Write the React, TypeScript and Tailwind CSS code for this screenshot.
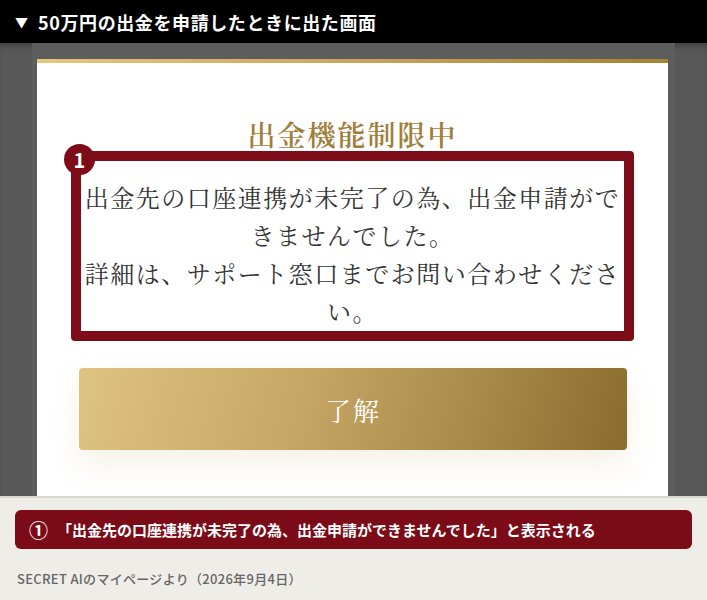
import React from 'react';

const serif = { fontFamily: '"Noto Serif CJK JP", "Liberation Serif", "Noto Sans CJK JP", serif' };

export default function App() {
  return (
    <div
      className="w-[707px] h-[600px] overflow-hidden bg-[#efede8]"
      style={{ fontFamily: '"Noto Sans CJK JP", "Noto Sans", sans-serif' }}
    >
      {/* Caption bar */}
      <div className="h-[43px] bg-black flex items-center pl-[15px]">
        <span className="text-white text-[13px] leading-none mr-[10px]">▼</span>
        <span className="text-white text-[18px] font-bold tracking-[0.6px] leading-none">
          50万円の出金を申請したときに出た画面
        </span>
      </div>

      {/* Screenshot area */}
      <div className="h-[453px] bg-[#585858] px-[32px] shadow-[inset_0_6px_6px_-4px_rgba(0,0,0,0.35)]">
        <div className="h-full bg-[#5d5d5d] pl-[5px] pr-[7px] pt-[16px]">
          <div className="h-full bg-white flex flex-col">
            <div className="h-[4px] bg-gradient-to-r from-[#e4c87c] via-[#c9a65a] to-[#a5832f]" />

            <h1
              className="mt-[54px] text-center text-[28px] font-semibold leading-[34px] tracking-[2px] text-[#a07e3a]"
              style={serif}
            >
              出金機能制限中
            </h1>

            {/* Highlighted message */}
            <div className="relative mx-[34px] border-[10px] border-[#7d0c18] rounded-[4px] pt-[17px] pb-[1px]">
              <div className="absolute -left-[17px] -top-[17px] w-[31px] h-[31px] rounded-full bg-[#7d0c18] flex items-center justify-center">
                <span className="text-white text-[20px] font-bold leading-none">1</span>
              </div>
              <p
                className="text-center text-[24px] leading-[38px] tracking-[1.5px] text-[#333333]"
                style={serif}
              >
                出金先の口座連携が未完了の為、出金申請ができませんでした。
                <br />
                詳細は、サポート窓口までお問い合わせください。
              </p>
            </div>

            <button
              className="mt-[27px] ml-[42px] mr-[41px] h-[82px] rounded-[4px] bg-[linear-gradient(105deg,#dfc383_0%,#c6a765_40%,#a98b4b_70%,#8b6c2f_100%)] shadow-[0_14px_30px_rgba(190,160,90,0.15)] text-white text-[26px] tracking-[2px]"
              style={serif}
            >
              了解
            </button>
          </div>
        </div>
      </div>

      {/* Caption below */}
      <div className="border-t-[2px] border-[#d9d7d1] px-[15px] pt-[12px]">
        <div className="h-[39px] rounded-[6px] bg-[#7b0c17] flex items-center pl-[14px]">
          <span className="text-white text-[19px] font-bold leading-none mr-[9px]">①</span>
          <span className="text-white text-[15px] font-bold leading-none">
            「出金先の口座連携が未完了の為、出金申請ができませんでした」と表示される
          </span>
        </div>
        <p className="mt-[22px] pl-[2px] text-[13px] font-medium tracking-[0.3px] leading-[16px] text-[#666666]">
          SECRET AIのマイページより（2026年9月4日）
        </p>
      </div>
    </div>
  );
}
